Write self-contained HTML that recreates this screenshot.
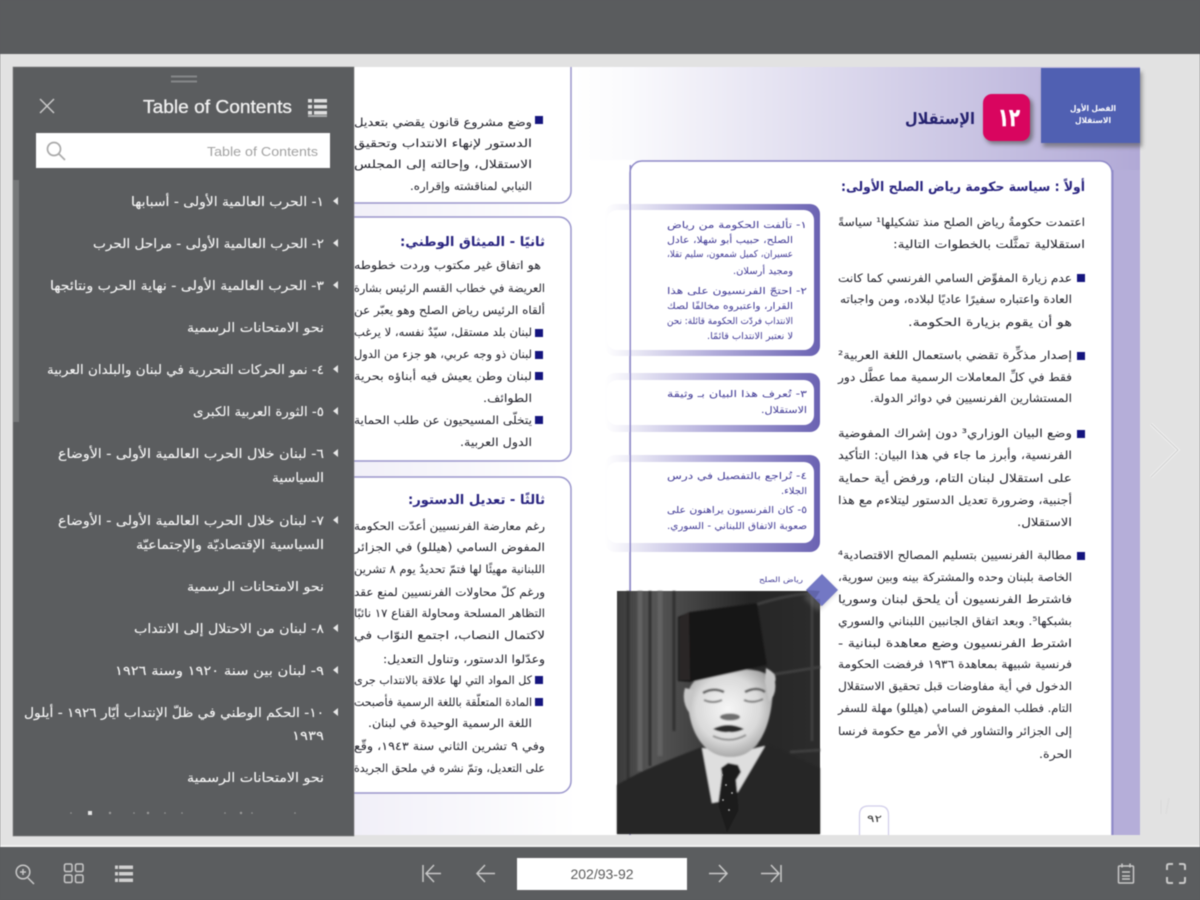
<!DOCTYPE html>
<html lang="ar"><head><meta charset="utf-8"><title>Book</title>
<style>
html,body{margin:0;padding:0;width:1200px;height:900px;overflow:hidden;background:#5a5c5e}
svg{display:block;filter:blur(.45px)}
text{font-family:"DejaVu Sans","Liberation Sans",sans-serif;direction:rtl}
.b{font-size:11.5px;fill:#1d1d26}
.n{font-size:9.5px;fill:#3f3894}
.h{font-size:13px;font-weight:bold;fill:#2a2580}
.t{font-size:13px;fill:#f6f6f6;stroke:#f6f6f6;stroke-width:.12px}
.l{direction:ltr;font-family:"Liberation Sans",sans-serif}
</style></head><body>
<svg width="1200" height="900" viewBox="0 0 1200 900" xmlns="http://www.w3.org/2000/svg">
<defs>
<linearGradient id="pr" x1="0" x2="1" y1="0" y2="0"><stop offset="0" stop-color="#fff"/><stop offset=".1" stop-color="#fafafd"/><stop offset="1" stop-color="#b1a9d6"/></linearGradient>
<linearGradient id="pl" x1="0" x2="1" y1="0" y2="0"><stop offset="0" stop-color="#dcd8ee"/><stop offset="1" stop-color="#fff"/></linearGradient>
<linearGradient id="bx" x1="0" x2="1" y1="0" y2="0"><stop offset="0" stop-color="#fff"/><stop offset=".5" stop-color="#b3aedb"/><stop offset="1" stop-color="#6a62b2"/></linearGradient>
<radialGradient id="fc" cx=".47" cy=".45" r=".62"><stop offset="0" stop-color="#f6f6f6"/><stop offset=".6" stop-color="#dadada"/><stop offset=".9" stop-color="#a8a8a8"/><stop offset="1" stop-color="#808080"/></radialGradient>
<linearGradient id="cur" x1="0" x2="1" y1="0" y2="0"><stop offset="0" stop-color="#3a3a3a"/><stop offset=".17" stop-color="#565656"/><stop offset=".38" stop-color="#424242"/><stop offset=".65" stop-color="#262626"/><stop offset="1" stop-color="#2c2c2c"/></linearGradient>
<filter id="s8" x="-10%" y="-10%" width="120%" height="120%"><feGaussianBlur stdDeviation=".9"/></filter>
<filter id="s2" x="-30%" y="-30%" width="160%" height="160%"><feGaussianBlur stdDeviation="2"/></filter>
</defs>

<rect width="1200" height="900" fill="#e2e2e2"/>

<!-- pages -->
<rect x="13" y="67" width="562" height="768" fill="url(#pl)"/>
<rect x="575" y="67" width="565" height="768" fill="url(#pr)"/>
<rect x="575" y="160" width="60" height="675" fill="#fff"/>
<rect x="630" y="161" width="482" height="690" rx="12" fill="#fff" stroke="#8f8ac8" stroke-width="1.5"/>
<rect x="0" y="835" width="1200" height="13" fill="#e2e2e2"/>
<rect x="1112" y="170" width="28" height="665" fill="#b5aed9"/>
<rect x="1112" y="170" width="1.5" height="665" fill="#8f8ac8"/>

<!-- left page panels -->
<g fill="#fff" stroke="#9a96cc" stroke-width="1.5">
<rect x="300" y="30" width="271" height="173" rx="12"/>
<rect x="300" y="217" width="271" height="244" rx="12"/>
<rect x="300" y="477" width="271" height="316" rx="12"/>
</g>
<rect x="0" y="54" width="1200" height="13" fill="#e2e2e2"/>
<rect x="0" y="0" width="1200" height="54" fill="#5a5c5e"/>

<!-- header -->
<rect x="1043" y="72" width="99" height="75" fill="#555" opacity=".6" filter="url(#s2)"/>
<rect x="1041" y="68" width="99" height="75" fill="#5060b2"/>
<rect x="985" y="97" width="48" height="47" rx="9" fill="#444" opacity=".6" filter="url(#s2)"/>
<rect x="983" y="94" width="47" height="47" rx="9" fill="#d9055f"/>
<g>
<text x="1116" y="111" font-size="8" font-weight="bold" fill="#fff" textLength="46" lengthAdjust="spacingAndGlyphs">الفصل الأول</text>
<text x="1111" y="123" font-size="8" font-weight="bold" fill="#fff" textLength="36" lengthAdjust="spacingAndGlyphs">الاستقلال</text>
<text x="1020" y="126" font-size="25" font-weight="bold" fill="#fff" stroke="#fff" stroke-width=".5" textLength="22" lengthAdjust="spacingAndGlyphs">١٢</text>
<text x="975" y="124" font-size="16" font-weight="bold" fill="#25226f" textLength="70" lengthAdjust="spacingAndGlyphs">الإستقلال</text>

<!-- right page text -->
<text class="h" x="1085" y="191" textLength="244" lengthAdjust="spacingAndGlyphs">أولاً : سياسة حكومة رياض الصلح الأولى:</text>
<g class="b">
<text class="b" x="1085" y="226" textLength="247" lengthAdjust="spacingAndGlyphs">اعتمدت حكومةُ رياض الصلح منذ تشكيلها¹ سياسةً</text>
<text class="b" x="1085" y="248" textLength="192" lengthAdjust="spacingAndGlyphs">استقلالية تمثَّلت بالخطوات التالية:</text>
<text class="b" x="1072" y="282" textLength="234" lengthAdjust="spacingAndGlyphs">عدم زيارة المفوِّض السامي الفرنسي كما كانت</text>
<text class="b" x="1072" y="303" textLength="232" lengthAdjust="spacingAndGlyphs">العادة واعتباره سفيرًا عاديًا لبلاده، ومن واجباته</text>
<text class="b" x="1072" y="326" textLength="164" lengthAdjust="spacingAndGlyphs">هو أن يقوم بزيارة الحكومة.</text>
<text class="b" x="1072" y="359" textLength="234" lengthAdjust="spacingAndGlyphs">إصدار مذكِّرة تقضي باستعمال اللغة العربية²</text>
<text class="b" x="1072" y="381" textLength="234" lengthAdjust="spacingAndGlyphs">فقط في كلِّ المعاملات الرسمية مما عطَّل دور</text>
<text class="b" x="1072" y="402" textLength="202" lengthAdjust="spacingAndGlyphs">المستشارين الفرنسيين في دوائر الدولة.</text>
<text class="b" x="1072" y="437" textLength="234" lengthAdjust="spacingAndGlyphs">وضع البيان الوزاري³ دون إشراك المفوضية</text>
<text class="b" x="1072" y="459" textLength="234" lengthAdjust="spacingAndGlyphs">الفرنسية، وأبرز ما جاء في هذا البيان: التأكيد</text>
<text class="b" x="1072" y="482" textLength="234" lengthAdjust="spacingAndGlyphs">على استقلال لبنان التام، ورفض أية حماية</text>
<text class="b" x="1072" y="504" textLength="234" lengthAdjust="spacingAndGlyphs">أجنبية، وضرورة تعديل الدستور ليتلاءم مع هذا</text>
<text class="b" x="1072" y="526" textLength="55" lengthAdjust="spacingAndGlyphs">الاستقلال.</text>
<text class="b" x="1072" y="559" textLength="234" lengthAdjust="spacingAndGlyphs">مطالبة الفرنسيين بتسليم المصالح الاقتصادية⁴</text>
<text class="b" x="1072" y="581" textLength="234" lengthAdjust="spacingAndGlyphs">الخاصة بلبنان وحده والمشتركة بينه وبين سورية،</text>
<text class="b" x="1072" y="603" textLength="234" lengthAdjust="spacingAndGlyphs">فاشترط الفرنسيون أن يلحق لبنان وسوريا</text>
<text class="b" x="1072" y="625" textLength="234" lengthAdjust="spacingAndGlyphs">بشبكها⁵. وبعد اتفاق الجانبين اللبناني والسوري</text>
<text class="b" x="1072" y="647" textLength="234" lengthAdjust="spacingAndGlyphs">اشترط الفرنسيون وضع معاهدة لبنانية -</text>
<text class="b" x="1072" y="668" textLength="234" lengthAdjust="spacingAndGlyphs">فرنسية شبيهة بمعاهدة ١٩٣٦ فرفضت الحكومة</text>
<text class="b" x="1072" y="690" textLength="234" lengthAdjust="spacingAndGlyphs">الدخول في أية مفاوضات قبل تحقيق الاستقلال</text>
<text class="b" x="1072" y="712" textLength="234" lengthAdjust="spacingAndGlyphs">التام. فطلب المفوض السامي (هيللو) مهلة للسفر</text>
<text class="b" x="1072" y="735" textLength="234" lengthAdjust="spacingAndGlyphs">إلى الجزائر والتشاور في الأمر مع حكومة فرنسا</text>
<text class="b" x="1072" y="758" textLength="33" lengthAdjust="spacingAndGlyphs">الحرة.</text>
</g>
</g>
<g fill="#15157e">
<rect x="1077" y="274" width="8" height="8"/><rect x="1077" y="352" width="8" height="8"/><rect x="1077" y="430" width="8" height="8"/><rect x="1077" y="552" width="8" height="8"/>
<rect x="535" y="116" width="8" height="8"/><rect x="535" y="329" width="8" height="8"/><rect x="535" y="351" width="8" height="8"/><rect x="535" y="372" width="8" height="8"/><rect x="535" y="416" width="8" height="8"/><rect x="535" y="676" width="8" height="8"/><rect x="535" y="698" width="8" height="8"/>
</g>

<!-- side notes -->
<rect x="605" y="204" width="215" height="152" rx="10" fill="url(#bx)"/>
<rect x="607" y="210" width="207" height="140" rx="10" fill="#fff"/>
<rect x="605" y="373" width="215" height="59" rx="10" fill="url(#bx)"/>
<rect x="607" y="380" width="207" height="45" rx="10" fill="#fff"/>
<rect x="605" y="455" width="215" height="97" rx="10" fill="url(#bx)"/>
<rect x="607" y="462" width="207" height="81" rx="10" fill="#fff"/>
<rect x="629.5" y="165" width="1.5" height="430" fill="#8f8ac8"/>
<g>
<g class="n">
<text class="n" x="807" y="228" textLength="140" lengthAdjust="spacingAndGlyphs">١- تألفت الحكومة من رياض</text>
<text class="n" x="793" y="243" textLength="126" lengthAdjust="spacingAndGlyphs">الصلح، حبيب أبو شهلا، عادل</text>
<text class="n" x="793" y="257" textLength="126" lengthAdjust="spacingAndGlyphs">عسيران، كميل شمعون، سليم تقلا،</text>
<text class="n" x="793" y="274" textLength="60" lengthAdjust="spacingAndGlyphs">ومجيد أرسلان.</text>
<text class="n" x="807" y="294" textLength="140" lengthAdjust="spacingAndGlyphs">٢- احتجّ الفرنسيون على هذا</text>
<text class="n" x="793" y="309" textLength="126" lengthAdjust="spacingAndGlyphs">القرار، واعتبروه مخالفًا لصك</text>
<text class="n" x="793" y="324" textLength="126" lengthAdjust="spacingAndGlyphs">الانتداب فردّت الحكومة قائلة: نحن</text>
<text class="n" x="793" y="339" textLength="86" lengthAdjust="spacingAndGlyphs">لا نعتبر الانتداب قائمًا.</text>
<text class="n" x="807" y="397" textLength="140" lengthAdjust="spacingAndGlyphs">٣- تُعرف هذا البيان بـ وثيقة</text>
<text class="n" x="807" y="413" textLength="46" lengthAdjust="spacingAndGlyphs">الاستقلال.</text>
<text class="n" x="807" y="479" textLength="140" lengthAdjust="spacingAndGlyphs">٤- تُراجع بالتفصيل في درس</text>
<text class="n" x="807" y="494" textLength="26" lengthAdjust="spacingAndGlyphs">الجلاء.</text>
<text class="n" x="807" y="513" textLength="140" lengthAdjust="spacingAndGlyphs">٥- كان الفرنسيون يراهنون على</text>
<text class="n" x="807" y="529" textLength="140" lengthAdjust="spacingAndGlyphs">صعوبة الاتفاق اللبناني - السوري.</text>
<text class="n" x="803" y="582" style="font-size:7px" textLength="44" lengthAdjust="spacingAndGlyphs">رياض الصلح</text>
</g>

<!-- left page text -->
<text class="b" x="532" y="126" textLength="178" lengthAdjust="spacingAndGlyphs">وضع مشروع قانون يقضي بتعديل</text>
<text class="b" x="532" y="147" textLength="178" lengthAdjust="spacingAndGlyphs">الدستور لإنهاء الانتداب وتحقيق</text>
<text class="b" x="532" y="168" textLength="178" lengthAdjust="spacingAndGlyphs">الاستقلال، وإحالته إلى المجلس</text>
<text class="b" x="532" y="190" textLength="122" lengthAdjust="spacingAndGlyphs">النيابي لمناقشته وإقراره.</text>
<text class="h" x="545" y="246" textLength="145" lengthAdjust="spacingAndGlyphs">ثانيًا - الميثاق الوطني:</text>
<text class="b" x="541" y="269" textLength="187" lengthAdjust="spacingAndGlyphs">هو اتفاق غير مكتوب وردت خطوطه</text>
<text class="b" x="545" y="292" textLength="191" lengthAdjust="spacingAndGlyphs">العريضة في خطاب القسم الرئيس بشارة</text>
<text class="b" x="545" y="314" textLength="191" lengthAdjust="spacingAndGlyphs">ألقاه الرئيس رياض الصلح وهو يعبّر عن</text>
<text class="b" x="532" y="336" textLength="178" lengthAdjust="spacingAndGlyphs">لبنان بلد مستقل، سيّدٌ نفسه، لا يرغب</text>
<text class="b" x="532" y="358" textLength="178" lengthAdjust="spacingAndGlyphs">لبنان ذو وجه عربي، هو جزء من الدول</text>
<text class="b" x="532" y="380" textLength="178" lengthAdjust="spacingAndGlyphs">لبنان وطن يعيش فيه أبناؤه بحرية</text>
<text class="b" x="532" y="402" textLength="49" lengthAdjust="spacingAndGlyphs">الطوائف.</text>
<text class="b" x="532" y="424" textLength="178" lengthAdjust="spacingAndGlyphs">يتخلّى المسيحيون عن طلب الحماية</text>
<text class="b" x="532" y="446" textLength="72" lengthAdjust="spacingAndGlyphs">الدول العربية.</text>
<text class="h" x="545" y="504" textLength="137" lengthAdjust="spacingAndGlyphs">ثالثًا - تعديل الدستور:</text>
<text class="b" x="545" y="530" textLength="191" lengthAdjust="spacingAndGlyphs">رغم معارضة الفرنسيين أعدّت الحكومة</text>
<text class="b" x="545" y="551" textLength="191" lengthAdjust="spacingAndGlyphs">المفوض السامي (هيللو) في الجزائر</text>
<text class="b" x="545" y="573" textLength="191" lengthAdjust="spacingAndGlyphs">اللبنانية مهيئًا لها فتمّ تحديدُ يوم ٨ تشرين</text>
<text class="b" x="545" y="596" textLength="191" lengthAdjust="spacingAndGlyphs">ورغم كلّ محاولات الفرنسيين لمنع عقد</text>
<text class="b" x="545" y="617" textLength="191" lengthAdjust="spacingAndGlyphs">التظاهر المسلحة ومحاولة القناع ١٧ نائبًا</text>
<text class="b" x="545" y="639" textLength="191" lengthAdjust="spacingAndGlyphs">لاكتمال النصاب، اجتمع النوّاب في</text>
<text class="b" x="545" y="663" textLength="162" lengthAdjust="spacingAndGlyphs">وعدّلوا الدستور، وتناول التعديل:</text>
<text class="b" x="532" y="684" textLength="178" lengthAdjust="spacingAndGlyphs">كل المواد التي لها علاقة بالانتداب جرى</text>
<text class="b" x="532" y="706" textLength="178" lengthAdjust="spacingAndGlyphs">المادة المتعلّقة باللغة الرسمية فأصبحت</text>
<text class="b" x="532" y="727" textLength="164" lengthAdjust="spacingAndGlyphs">اللغة الرسمية الوحيدة في لبنان.</text>
<text class="b" x="545" y="750" textLength="191" lengthAdjust="spacingAndGlyphs">وفي ٩ تشرين الثاني سنة ١٩٤٣، وقّع</text>
<text class="b" x="545" y="772" textLength="191" lengthAdjust="spacingAndGlyphs">على التعديل، وتمّ نشره في ملحق الجريدة</text>
</g>

<!-- portrait -->
<g>
<rect x="617" y="591" width="203" height="243" fill="url(#cur)"/>
<g filter="url(#s8)">
<path d="M628 591v190M650 591v175M674 591v140" stroke="#333" stroke-width="3" fill="none"/>
<path d="M640 591v180M660 591v165" stroke="#626262" stroke-width="5" fill="none"/>
<path d="M755 605q30-10 65-13M770 675l50-8M790 752l30-2M812 591v150" stroke="#3d3d3d" stroke-width="3" fill="none"/>
<path d="M617 785C645 768 680 756 704 746L768 744C790 754 808 762 820 768V834H617Z" fill="#262626"/>
<path d="M702 748L712 803L728 800L738 792L765 746L740 752Z" fill="#dedede"/>
<path d="M688 695C687 725 700 757 731 757C757 757 771 730 773 690C774 672 760 668 731 670C705 672 690 678 688 695Z" fill="url(#fc)"/>
<path d="M685 688q-4 14 5 26l4-24zM766 668q12 6 9 14q2 12-6 20l-4-20z" fill="#c6c6c6"/>
<path d="M678 617L690 612L757 603L767 665L690 682L678 681Z" fill="#181414"/>
<path d="M679 618L689 612L690 680L679 680Z" fill="#2b2727"/>
<path d="M703 693q10-6 21-1M745 692q12-6 20 0" stroke="#5a5a5a" stroke-width="2.500" fill="none"/>
<path d="M704 700q9 4 18 0M744 700q9 4 19-1" stroke="#777" stroke-width="2" fill="none"/>
<ellipse cx="730" cy="717" rx="10" ry="3.500" fill="#6e6e6e"/>
<path d="M713 729q15-8 31 0q-8 4-15 3q-8 1-16-3z" fill="#2c2c2c"/>
<path d="M713 736q17 8 33-1" stroke="#8e8e8e" stroke-width="2" fill="none"/>
<path d="M721 768l7-5l10 2l3 7l-5 8l3 30l-12 23l-9-28l4-30z" fill="#1f1f1f"/>
</g>
<g fill="#a0a0a0"><circle cx="726" cy="785" r="1"/><circle cx="732" cy="793" r="1"/><circle cx="723" cy="800" r="1"/><circle cx="729" cy="810" r="1"/><circle cx="722" cy="775" r="1"/></g>
</g>
<rect x="810" y="582" width="20" height="28" fill="#888" opacity=".35" filter="url(#s2)" transform="rotate(45 822 596)"/>
<path d="M822 574L838 590L822 606L806 590Z" fill="#7378c4"/>
<path d="M806 590L815 599H820V606H822L815 599L820 591Z" fill="#4f5290" opacity=".5"/>

<!-- page number tab -->
<path d="M859.500 835V815q0-9 9-9h11q9 0 9 9v20" fill="#fff" stroke="#d0cdea" stroke-width="1.2"/>
<text x="882" y="822" font-size="10" fill="#333" textLength="15" lengthAdjust="spacingAndGlyphs">٩٢</text>

<!-- chevron -->
<path d="M1151 424L1178 450L1151 477" fill="none" stroke="#f0f0f0" stroke-width="3"/>
<path d="M1151 424L1178 450L1151 477" fill="none" stroke="#cfcfcf" stroke-width="1"/>
<path d="M1161 800l0 14M1169 798l-3 16" stroke="#dcdcdc" stroke-width="1.500" fill="none"/>

<!-- TOC panel -->
<rect x="13" y="67" width="341" height="769" fill="#5b5d5f" stroke="#808080" stroke-width=".6"/>
<rect x="13" y="180" width="6" height="242" fill="#767879"/>
<path d="M171 76.500H197M171 81.500H197" stroke="#858789" stroke-width="2"/>
<path d="M40 99L54 113M54 99L40 113" stroke="#c9c9c9" stroke-width="1.500" fill="none"/>
<text class="l" x="143" y="113" font-size="18" fill="#f0f0f0" stroke="#f0f0f0" stroke-width=".3" textLength="149" lengthAdjust="spacingAndGlyphs">Table of Contents</text>
<g fill="#dedede"><rect x="308" y="99" width="4" height="3.500"/><rect x="314" y="99" width="13" height="3.500"/><rect x="308" y="105" width="4" height="3.500"/><rect x="314" y="105" width="13" height="3.500"/><rect x="308" y="111" width="4" height="3.500"/><rect x="314" y="111" width="13" height="3.500"/><rect x="308" y="115" width="19" height="2" opacity=".6"/></g>
<rect x="36" y="133" width="294" height="35" fill="#fff"/>
<circle cx="54" cy="149" r="6.500" fill="none" stroke="#aaa" stroke-width="1.700"/>
<path d="M59 154L65 160" stroke="#aaa" stroke-width="1.700"/>
<text class="l" x="207" y="156" font-size="13" fill="#a2a2a2" textLength="111" lengthAdjust="spacingAndGlyphs">Table of Contents</text>

<g>
<text class="t" x="324" y="206" textLength="193" lengthAdjust="spacingAndGlyphs">١- الحرب العالمية الأولى - أسبابها</text>
<text class="t" x="324" y="248" textLength="231" lengthAdjust="spacingAndGlyphs">٢- الحرب العالمية الأولى - مراحل الحرب</text>
<text class="t" x="324" y="290" textLength="274" lengthAdjust="spacingAndGlyphs">٣- الحرب العالمية الأولى - نهاية الحرب ونتائجها</text>
<text class="t" x="324" y="332" textLength="137" lengthAdjust="spacingAndGlyphs">نحو الامتحانات الرسمية</text>
<text class="t" x="324" y="374" textLength="277" lengthAdjust="spacingAndGlyphs">٤- نمو الحركات التحررية في لبنان والبلدان العربية</text>
<text class="t" x="324" y="416" textLength="131" lengthAdjust="spacingAndGlyphs">٥- الثورة العربية الكبرى</text>
<text class="t" x="324" y="458" textLength="266" lengthAdjust="spacingAndGlyphs">٦- لبنان خلال الحرب العالمية الأولى - الأوضاع</text>
<text class="t" x="324" y="482" textLength="52" lengthAdjust="spacingAndGlyphs">السياسية</text>
<text class="t" x="324" y="525" textLength="266" lengthAdjust="spacingAndGlyphs">٧- لبنان خلال الحرب العالمية الأولى - الأوضاع</text>
<text class="t" x="324" y="549" textLength="188" lengthAdjust="spacingAndGlyphs">السياسية الإقتصاديّة والإجتماعيّة</text>
<text class="t" x="324" y="591" textLength="137" lengthAdjust="spacingAndGlyphs">نحو الامتحانات الرسمية</text>
<text class="t" x="324" y="633" textLength="190" lengthAdjust="spacingAndGlyphs">٨- لبنان من الاحتلال إلى الانتداب</text>
<text class="t" x="324" y="675" textLength="209" lengthAdjust="spacingAndGlyphs">٩- لبنان بين سنة ١٩٢٠ وسنة ١٩٢٦</text>
<text class="t" x="324" y="717" textLength="300" lengthAdjust="spacingAndGlyphs">١٠- الحكم الوطني في ظلّ الإنتداب أيّار ١٩٢٦ - أيلول</text>
<text class="t" x="324" y="740" textLength="32" lengthAdjust="spacingAndGlyphs">١٩٣٩</text>
<text class="t" x="324" y="782" textLength="137" lengthAdjust="spacingAndGlyphs">نحو الامتحانات الرسمية</text>
</g>
<g fill="#e8e8e8">
<path d="M338 197l-5 4l5 4zM338 239l-5 4l5 4zM338 281l-5 4l5 4zM338 365l-5 4l5 4zM338 407l-5 4l5 4zM338 449l-5 4l5 4zM338 516l-5 4l5 4zM338 624l-5 4l5 4zM338 666l-5 4l5 4zM338 708l-5 4l5 4z"/>
</g>
<g fill="#9a9a9a"><circle cx="71" cy="813" r=".8"/><rect x="88" y="811" width="4" height="4" fill="#e5e5e5"/><circle cx="110" cy="813" r="1.200"/><circle cx="134" cy="813" r=".8"/><circle cx="148" cy="813" r="1.200"/><circle cx="165" cy="813" r=".8"/><circle cx="182" cy="813" r=".8"/><circle cx="225" cy="813" r=".8"/><circle cx="241" cy="813" r="1.200"/><circle cx="252" cy="813" r=".8"/><circle cx="295" cy="813" r=".8"/></g>

<!-- bottom bar -->
<rect x="0" y="845" width="1200" height="2" fill="#f1f1f1"/>
<rect x="0" y="847" width="1200" height="53" fill="#5b5d5f"/>
<g fill="none" stroke="#c8c8c8" stroke-width="1.500">
<circle cx="23" cy="872" r="6.800"/><path d="M28 878L34 884M23 869v6M20 872h6"/>
<rect x="64.500" y="864" width="7.500" height="7.500" rx="1.500"/><rect x="75.500" y="864" width="7.500" height="7.500" rx="1.500"/><rect x="64.500" y="875" width="7.500" height="7.500" rx="1.500"/><rect x="75.500" y="875" width="7.500" height="7.500" rx="1.500"/>
<path d="M423 865v17M426 873.500h15M434 865l-8 8.500l8 8.500"/>
<path d="M477 873.500h18M485 865l-8 8.500l8 8.500"/>
<path d="M709 873.500h18M719 865l8 8.500l-8 8.500"/>
<path d="M761 873.500h17M771 865l8 8.500l-8 8.500M781 865v17"/>
<rect x="1118.500" y="866" width="15" height="17" rx="1"/><path d="M1122 863.500v4M1130 863.500v4M1122 872h8M1122 876h8M1122 879h8"/>
<path d="M1167 870v-4q0-2 2-2h4M1179 864h4q2 0 2 2v4M1185 877v4q0 2-2 2h-4M1173 883h-4q-2 0-2-2v-4" stroke-width="2"/>
</g>
<g fill="#d0d0d0"><rect x="115" y="865.500" width="18" height="3.500"/><rect x="115" y="872" width="18" height="3.500"/><rect x="115" y="878.500" width="18" height="3.500"/></g>
<g fill="#5b5d5f"><rect x="118" y="865" width="1" height="18"/></g>
<rect x="517" y="858" width="170" height="32" fill="#fff"/>
<text class="l" x="602" y="879" font-size="14" fill="#5a5a5a" text-anchor="middle" style="direction:ltr">202/93-92</text>
</svg>
</body></html>
